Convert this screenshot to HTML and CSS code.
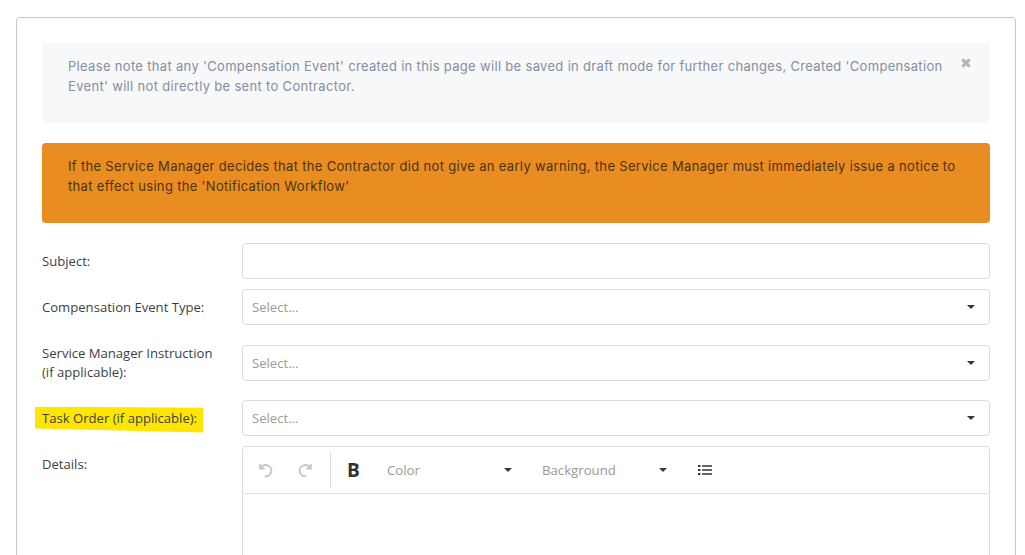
FILE: index.html
```html
<!DOCTYPE html>
<html lang="en">
<head>
<meta charset="utf-8">
<title>Compensation Event</title>
<link rel="stylesheet" href="styles.css">
</head>
<body>
<main class="card">
  <div class="alert alert-info">
    <p>Please note that any 'Compensation Event' created in this page will be saved in draft mode for further changes, Created 'Compensation Event' will not directly be sent to Contractor.</p>
    <svg class="close" viewBox="0 0 12 12" aria-label="Close"><path d="M2.4 2.4 9.6 9.6M9.6 2.4 2.4 9.6"/></svg>
  </div>
  <div class="alert alert-warning">
    <p>If the Service Manager decides that the Contractor did not give an early warning, the Service Manager must immediately issue a notice to that effect using the 'Notification Workflow'</p>
  </div>
  <form class="form">
    <div class="row row-subject">
      <label class="label">Subject:</label>
      <input class="control" type="text">
    </div>
    <div class="row row-type">
      <label class="label">Compensation Event Type:</label>
      <div class="control select"><span>Select...</span><i class="caret"></i></div>
    </div>
    <div class="row row-instruction">
      <label class="label">Service Manager Instruction<br>(if applicable):</label>
      <div class="control select"><span>Select...</span><i class="caret"></i></div>
    </div>
    <div class="row row-task">
      <label class="label"><span class="highlight"></span><span class="label-text">Task Order (if applicable):</span></label>
      <div class="control select"><span>Select...</span><i class="caret"></i></div>
    </div>
    <div class="row row-details">
      <label class="label">Details:</label>
      <div class="editor">
        <div class="toolbar">
          <div class="history">
            <svg class="tool-icon" viewBox="0 0 16 16"><path d="M3.2 2.2v4.4h4.4M3.6 6.4A5.6 5.6 0 1 1 7.8 14.2"/></svg>
            <svg class="tool-icon" viewBox="0 0 16 16"><path d="M12.8 2.2v4.4H8.4M12.4 6.4A5.6 5.6 0 1 0 8.2 14.2"/></svg>
          </div>
          <b class="bold">B</b>
          <div class="picker picker-color"><span>Color</span><i class="caret"></i></div>
          <div class="picker picker-bg"><span>Background</span><i class="caret"></i></div>
          <svg class="list-icon" viewBox="0 0 14 12"><path d="M0 1h2.4v2H0zM0 5h2.4v2H0zM0 9h2.4v2H0zM4 1.2h10v1.6H4zM4 5.2h10v1.6H4zM4 9.2h10v1.6H4z"/></svg>
        </div>
        <div class="editor-body"></div>
      </div>
    </div>
  </form>
</main>
</body>
</html>
```
FILE: styles.css
```css
* { box-sizing: border-box; }
html, body { margin: 0; height: 555px; overflow: hidden; background: #fff; }
body { padding: 17px 9px 0 16px; font-family: "Open Sans", "Liberation Sans", sans-serif; }

.card {
  border: 1px solid #c9c9c9;
  border-radius: 4px;
  padding: 25px 25px 30px;
  width: 1000px;
  height: 700px;
  background: #fff;
}

.alert {
  height: 80px;
  border-radius: 4px;
  padding: 13px 26px;
  margin-bottom: 20px;
  font-family: Inter, "Open Sans", sans-serif;
  font-size: 13px;
  line-height: 20px;
  letter-spacing: 0.32px;
  position: relative;
}
.alert p { margin: 0; }
.alert-info { background: #f7f8fa; color: #868e9f; padding-right: 46px; }
.alert-warning { background: #e98d22; color: #4d3210; padding-right: 30px; }

.close {
  position: absolute;
  top: 14px;
  right: 18px;
  width: 12px;
  height: 12px;
  fill: none;
  stroke: #b5b5b5;
  stroke-width: 3;
}

.form { font-size: 13.1px; color: #3a3f44; }
.row { display: grid; grid-template-columns: 200px 748px; }
.label { display: block; line-height: 19px; position: relative; }
.row-subject { margin-bottom: 10px; align-items: center; }
.row-type { margin-bottom: 20px; align-items: center; }
.row-instruction { margin-bottom: 19px; height: 36px; }
.row-task { margin-bottom: 10px; align-items: center; }
.row-details { align-items: start; }
.row-details .label { padding-top: 9px; }
.row-instruction .label { margin-top: -1px; }

.highlight {
  position: absolute;
  left: -7px;
  top: -2px;
  width: 168px;
  height: 26px;
  background: #ffe600;
  clip-path: polygon(0 0, 100% 5%, 100% 100%, 0 85%);
}
.label-text { position: relative; }

.control {
  display: block;
  width: 748px;
  height: 36px;
  border: 1px solid #dcdcdc;
  border-radius: 4px;
  background: #fff;
  color: #9a9a9a;
}
.select {
  display: flex;
  align-items: center;
  justify-content: space-between;
  padding: 0 14px 0 9px;
}

.caret {
  width: 0;
  height: 0;
  border-left: 4px solid transparent;
  border-right: 4px solid transparent;
  border-top: 4px solid #33373b;
}

.editor { border: 1px solid #dcdcdc; border-radius: 4px 4px 0 0; height: 220px; }
.toolbar {
  height: 47px;
  border-bottom: 1px solid #e2e2e2;
  display: flex;
  align-items: center;
  padding-left: 14px;
  color: #9a9a9a;
  position: relative;
}
.history {
  display: flex;
  gap: 25px;
  height: 36px;
  align-items: center;
  width: 74px;
  border-right: 1px solid #dedede;
}
.tool-icon { width: 16px; height: 16px; fill: none; stroke: #c6c6c6; stroke-width: 2; }
.bold { width: 14px; margin-left: 16px; font-size: 19px; color: #2f3338; font-weight: 700; line-height: 1; }
.picker { display: flex; align-items: center; justify-content: space-between; font-size: 13.2px; }
.picker-color { width: 125px; margin-left: 26px; }
.picker-bg { width: 125px; margin-left: 30px; }
.list-icon { width: 14px; height: 12px; margin-left: 31px; fill: #2f3338; }
```
